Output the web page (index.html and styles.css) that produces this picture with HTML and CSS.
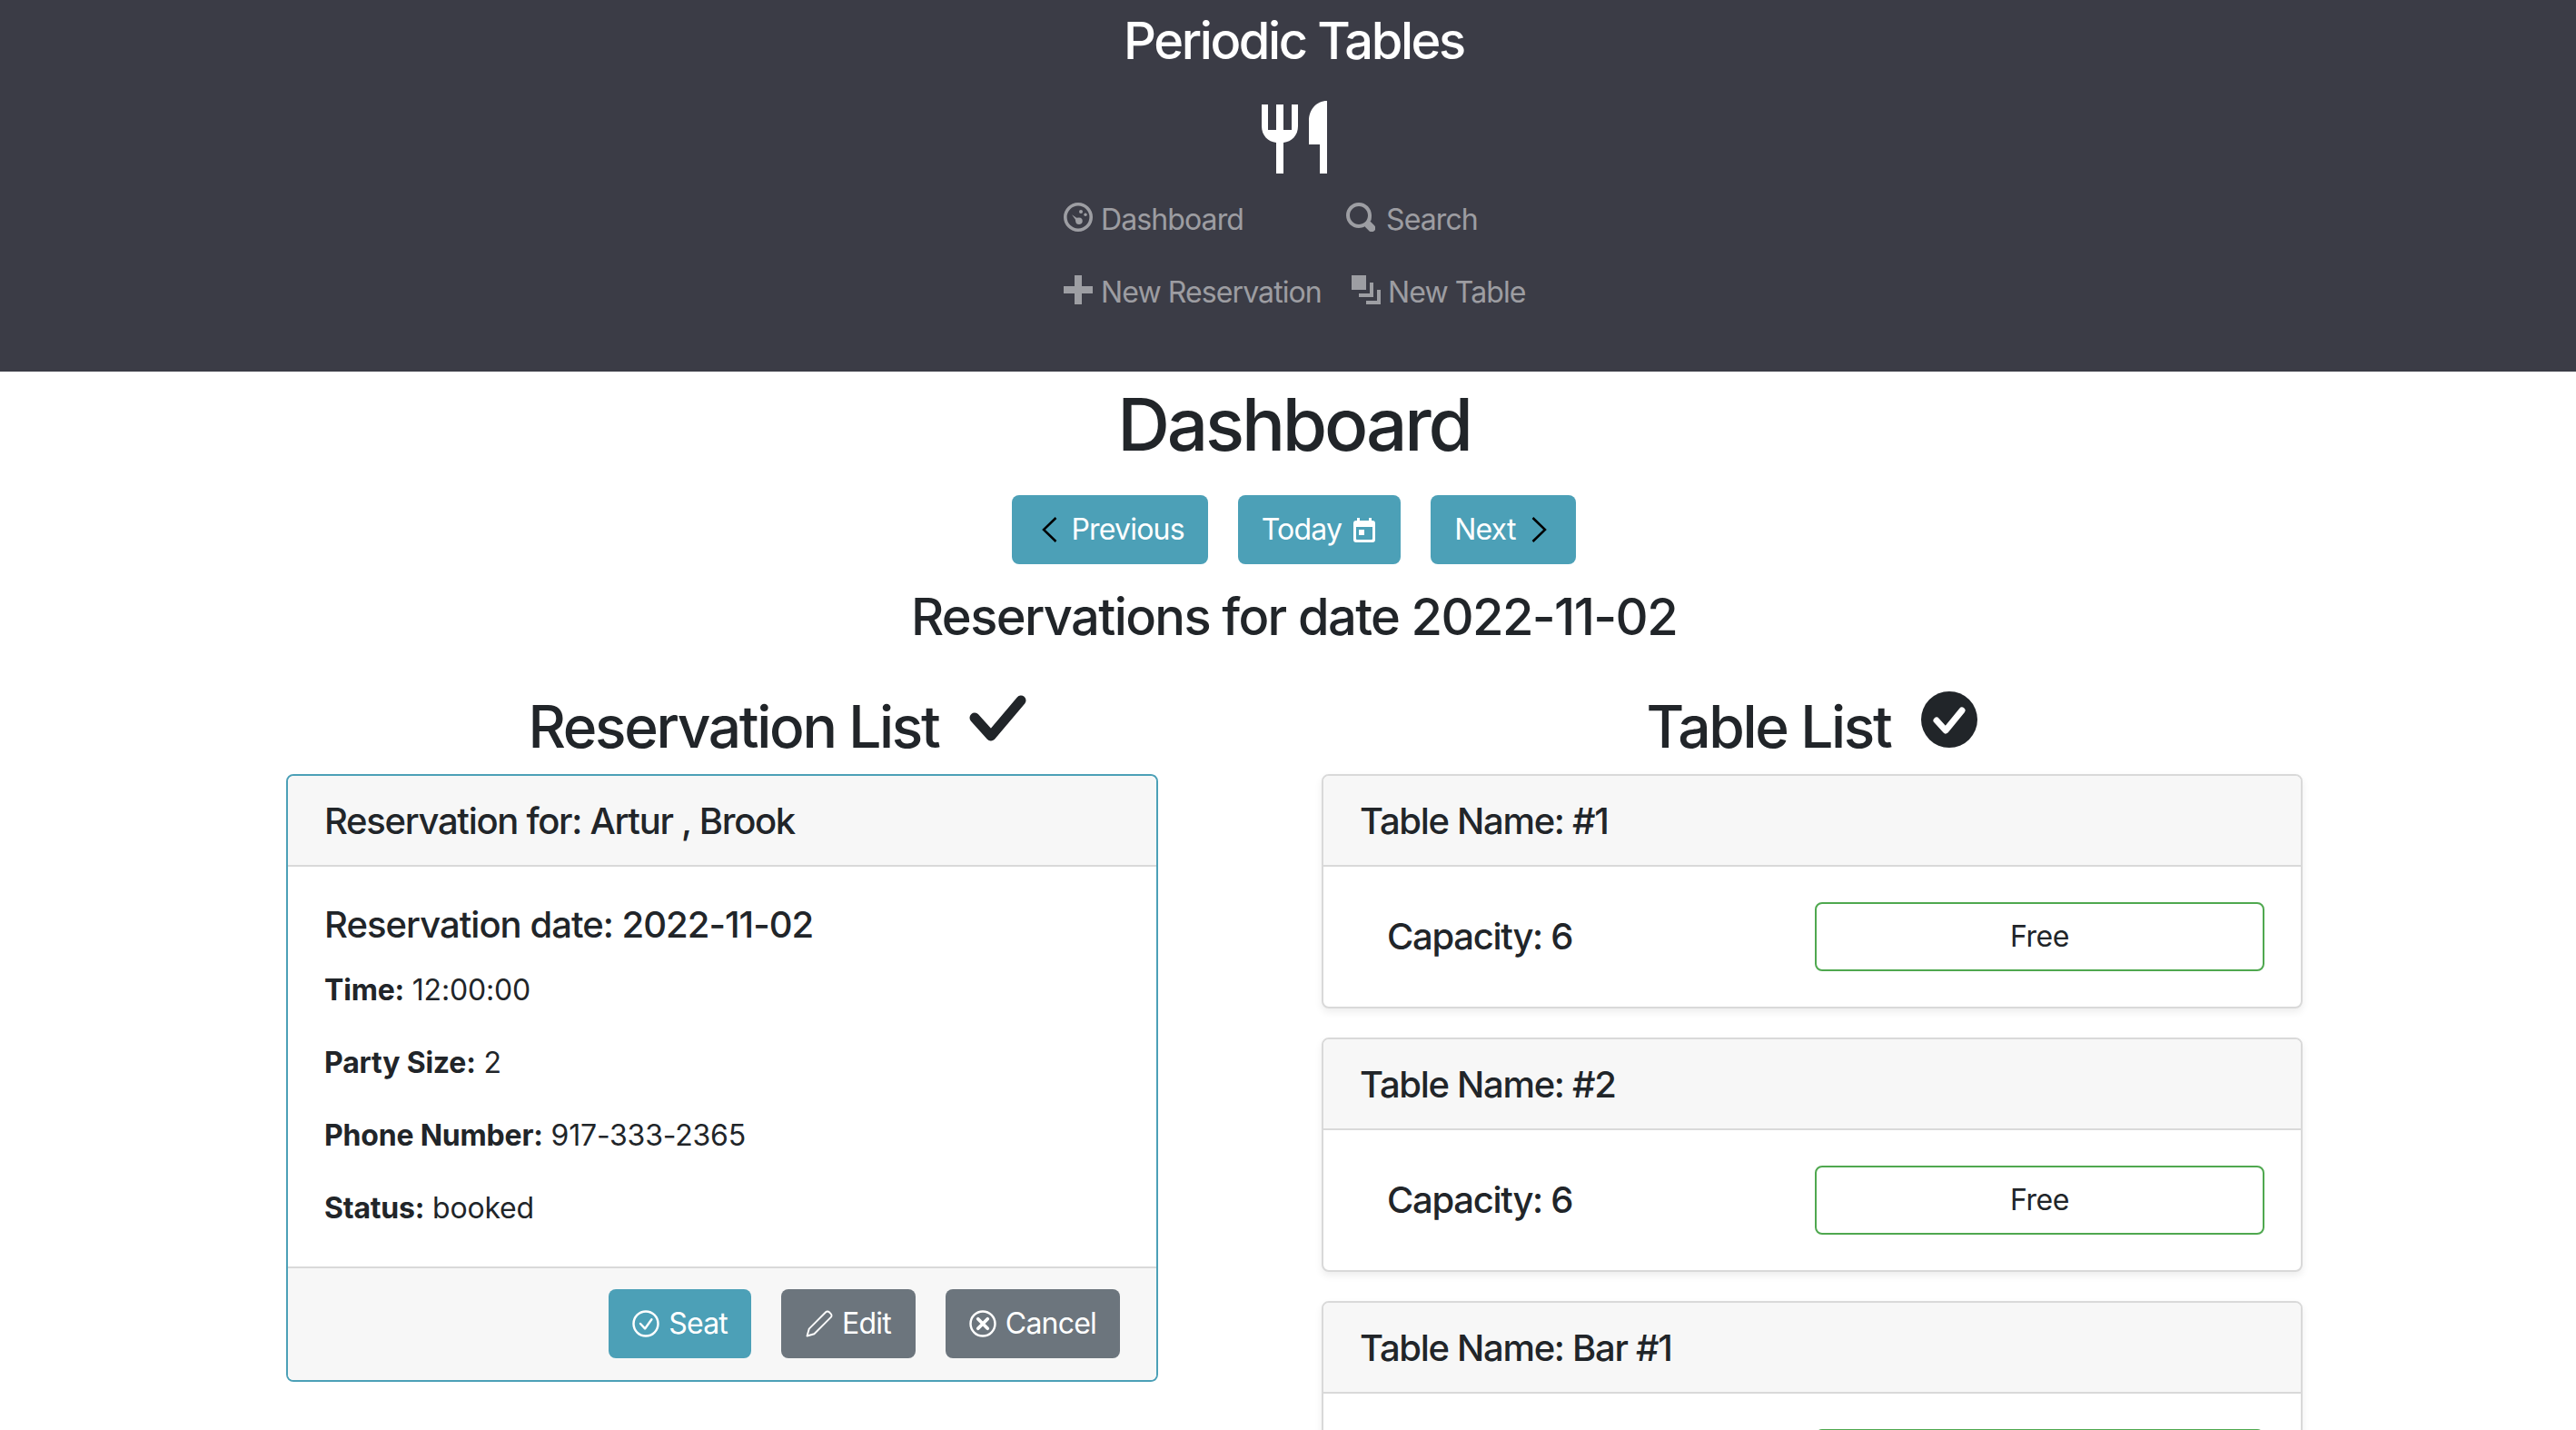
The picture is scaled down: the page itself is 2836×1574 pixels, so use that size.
FILE: index.html
```html
<!DOCTYPE html>
<html lang="en">
<head>
<meta charset="utf-8">
<title>Periodic Tables</title>
<link rel="stylesheet" href="styles.css">
</head>
<body>
<header class="topbar">
  <div class="brand">Periodic Tables</div>
  <svg class="logo" viewBox="0 0 72 80" aria-hidden="true"><path d="M0 4H7V32H16V4H24V32H33V4H40V28C40 38 33 45 24 46V80H16V46C7 45 0 38 0 28Z"/><path d="M72 0V80H64V48H52V22C52 10 60 0 72 0Z"/></svg>
  <nav class="nav">
    <a class="nav-link"><svg class="nav-icon" viewBox="0 0 8 8"><path fill-rule="evenodd" d="M4 0a4 4 0 1 0 0 8 4 4 0 0 0 0-8zm0 .9a3.100 3.100 0 1 1 0 6.200 3.100 3.100 0 0 1 0-6.200z"/><circle cx="4.750" cy="2.500" r=".5"/><circle cx="6" cy="3.300" r=".42"/><path d="M2.250 3.300l1.300.9.7-.1a.95.95 0 1 1-.95 1.100l-.1-.6z"/></svg><span class="gap-a">Dashboard</span></a>
    <a class="nav-link"><svg class="nav-icon" viewBox="0 0 8 8"><path d="M3.500 0C1.570 0 0 1.570 0 3.500S1.570 7 3.500 7c.59 0 1.170-.14 1.660-.41a1 1 0 0 0 .13.13l1 1a1.020 1.020 0 1 0 1.440-1.440l-1-1a1 1 0 0 0-.16-.13C6.840 5.160 7 4.590 7 3.500 7 1.570 5.430 0 3.500 0zm0 1C4.890 1 6 2.110 6 3.500c0 .66-.24 1.270-.66 1.720l-.03.03a1 1 0 0 0-.13.13c-.44.4-1.040.62-1.680.62C2.110 6 1 4.890 1 3.500S2.110 1 3.500 1z"/></svg><span class="gap-b">Search</span></a>
    <a class="nav-link"><svg class="nav-icon" viewBox="0 0 8 8"><path d="M3 0v3H0v2h3v3h2V5h3V3H5V0z"/></svg><span class="gap-a">New Reservation</span></a>
    <a class="nav-link col2-b"><svg class="nav-icon" viewBox="0 0 8 8"><path d="M0 0v4h4V0zm5 2v3H2v1h4V2zm2 2v3H4v1h4V4z"/></svg><span class="gap-c">New Table</span></a>
  </nav>
</header>

<main class="page">
  <h1 class="page-title">Dashboard</h1>
  <div class="date-nav">
    <button class="btn btn-teal btn-prev"><svg class="chev" viewBox="0 0 17 28"><path d="M15.500 1L2 14l13.500 13"/></svg><span class="gap-prev">Previous</span></button>
    <button class="btn btn-teal btn-today">Today<svg class="cal" viewBox="0 0 24 27"><path fill-rule="evenodd" d="M4 0h3v3h10V0h3v3h1a3 3 0 0 1 3 3v18a3 3 0 0 1-3 3H3a3 3 0 0 1-3-3V6a3 3 0 0 1 3-3h1zM3 10v13a1 1 0 0 0 1 1h16a1 1 0 0 0 1-1V10zm3 3h6v6H6z"/></svg></button>
    <button class="btn btn-teal btn-next">Next<svg class="chev chev-next" viewBox="0 0 17 28"><path d="M1.500 1L15 14 1.500 27"/></svg></button>
  </div>
  <h2 class="date-title">Reservations for date 2022-11-02</h2>

  <div class="columns">
    <section class="col-left">
      <h2 class="list-title"><span>Reservation List</span><svg class="check-big" viewBox="0 0 63 51"><path d="M6 25l18 20L57 6"/></svg></h2>
      <article class="card card-teal">
        <div class="card-header">Reservation for: Artur , Brook</div>
        <div class="card-body res-body">
          <h3 class="res-date">Reservation date: 2022-11-02</h3>
          <p><b>Time:</b> 12:00:00</p>
          <p><b>Party Size:</b> 2</p>
          <p><b>Phone Number:</b> 917-333-2365</p>
          <p><b>Status:</b> booked</p>
        </div>
        <div class="card-footer">
          <button class="btn btn-teal"><svg class="btn-icon" viewBox="0 0 16 16"><circle class="ring" cx="8" cy="8" r="7.200"/><path class="tick" d="M4.800 8l2.700 2.900 3.900-5.400"/></svg>Seat</button>
          <button class="btn btn-grey btn-edit"><svg class="btn-icon" viewBox="0 0 16 16"><path class="pen" d="M11.800 1.200a1.400 1.400 0 0 1 2 0l1 1a1.400 1.400 0 0 1 0 2L5 14 .8 15.200 2 11z"/></svg>Edit</button>
          <button class="btn btn-grey"><svg class="btn-icon" viewBox="0 0 16 16"><circle class="ring" cx="8" cy="8" r="7.200"/><path class="cross" d="M5.200 5.200l5.600 5.600M10.800 5.200l-5.600 5.600"/></svg>Cancel</button>
        </div>
      </article>
    </section>

    <section class="col-right">
      <h2 class="list-title"><span>Table List</span><svg class="check-circle" viewBox="0 0 62 62"><circle cx="31" cy="31" r="31"/><path d="M17 32l10 11 18-22"/></svg></h2>
      <article class="card card-table">
        <div class="card-header">Table Name: #1</div>
        <div class="card-body table-body"><h3 class="capacity">Capacity: 6</h3><button class="btn btn-free">Free</button></div>
      </article>
      <article class="card card-table">
        <div class="card-header">Table Name: #2</div>
        <div class="card-body table-body"><h3 class="capacity">Capacity: 6</h3><button class="btn btn-free">Free</button></div>
      </article>
      <article class="card card-table">
        <div class="card-header">Table Name: Bar #1</div>
        <div class="card-body table-body"><h3 class="capacity">Capacity: 1</h3><button class="btn btn-free">Free</button></div>
      </article>
    </section>
  </div>
</main>
</body>
</html>
```

FILE: styles.css
```css
* { box-sizing: border-box; }
html, body { margin: 0; height: 100vh; overflow: hidden; }
body {
  font-family: Inter, "Liberation Sans", sans-serif;
  font-size: 32px;
  line-height: 48px;
  color: #212529;
  background: #fff;
}
.topbar {
  height: 409px;
  padding: 12px 0 0 13px;
  background: #3b3c46;
  display: flex;
  flex-direction: column;
  align-items: center;
}
.brand {
  font-size: 56px;
  line-height: 67px;
  font-weight: 500;
  letter-spacing: -2.400px;
  color: #fff;
  margin-bottom: 32px;
}
.logo { width: 72px; height: 80px; fill: #fff; margin-bottom: 8px; flex: none; }
.nav {
  display: grid;
  grid-template-columns: 311px 210px;
  grid-auto-rows: 80px;
  align-self: flex-start;
  margin-left: 1158px;
}
.nav-link {
  display: flex;
  align-items: center;
  color: rgba(255, 255, 255, .5);
  letter-spacing: -.9px;
}
.nav-link span { padding-top: 6px; }
.nav-icon { width: 32px; height: 32px; fill: rgba(255, 255, 255, .5); flex: none; }
.gap-a { margin-left: 9px; }
.gap-b { margin-left: 12px; }
.gap-c { margin-left: 8px; }
.col2-b { padding-left: 6px; }

.page { padding-left: 13px; }
.page-title {
  margin: 10px 0 30px;
  font-size: 80px;
  line-height: 96px;
  font-weight: 500;
  letter-spacing: -3.200px;
  text-align: center;
}
.date-nav { display: flex; justify-content: center; gap: 33px; }
.btn {
  display: inline-flex;
  align-items: center;
  justify-content: center;
  height: 76px;
  padding: 0 26px;
  border: 0;
  border-radius: 8px;
  font: inherit;
  letter-spacing: -.8px;
  color: #fff;
  white-space: nowrap;
}
.btn-teal { background: #4ca0b7; }
.btn-grey { background: #6c757d; }
.btn-edit { padding: 0 27px; }
.chev { width: 17px; height: 28px; fill: none; stroke: #000; stroke-width: 2.500; flex: none; margin-left: 7px; }
.gap-prev { margin-left: 15px; }
.chev-next { margin-left: 17px; margin-right: 6px; }
.cal { width: 24px; height: 27px; fill: #fff; margin: 0 2px 0 13px; flex: none; }
.date-title {
  margin: 25px 0 48px;
  font-size: 56px;
  line-height: 67px;
  font-weight: 500;
  letter-spacing: -1.620px;
  text-align: center;
}
.columns { display: flex; gap: 58px; padding-left: 302px; }
.col-left { width: 1082px; }
.col-right { width: 1080px; }
.list-title {
  display: flex;
  justify-content: center;
  align-items: center;
  gap: 34px;
  height: 77px;
  margin: 0 0 14px;
  font-size: 64px;
  line-height: 77px;
  font-weight: 500;
  letter-spacing: -2.350px;
}
.check-big { width: 63px; height: 51px; fill: none; stroke: #212529; stroke-width: 11; stroke-linecap: round; stroke-linejoin: round; position: relative; top: -9px; }
.check-circle { width: 62px; height: 62px; position: relative; top: -8px; }
.check-circle circle { fill: #212529; }
.check-circle path { fill: none; stroke: #fff; stroke-width: 7; stroke-linecap: round; stroke-linejoin: round; }
.card {
  border: 2px solid #d9d9d9;
  border-radius: 8px;
  background: #fff;
  overflow: hidden;
}
.card-teal { width: 960px; border-color: #4ca0b7; }
.card-table { margin-bottom: 32px; box-shadow: 0 4px 8px rgba(0, 0, 0, .075); overflow: visible; }
.card-header {
  padding: 26px 40px 24px;
  height: 100px;
  background: #f7f7f7;
  border-bottom: 2px solid #d9d9d9;
  font-size: 40px;
  line-height: 48px;
  font-weight: 500;
  letter-spacing: -1.300px;
  border-radius: 6px 6px 0 0;
}
.card-body { padding: 40px; }
.res-date { margin: 0 0 24px; font-size: 40px; line-height: 48px; font-weight: 500; letter-spacing: -.97px; }
.res-body p { margin: 0 0 32px; letter-spacing: -.2px; }
.res-body p:last-child { margin-bottom: 0; }
.res-body b { font-weight: 700; }
.card-footer {
  display: flex;
  justify-content: flex-end;
  gap: 33px;
  padding: 23px 40px 24px 40px;
  background: #f7f7f7;
  border-top: 2px solid #d9d9d9;
}
.btn-icon { width: 30px; height: 30px; margin-right: 10px; flex: none; fill: none; stroke: #fff; }
.ring { stroke-width: 1.300; }
.tick { stroke-width: 1.300; stroke-linecap: round; stroke-linejoin: round; }
.pen { stroke-width: 1; stroke-linejoin: round; }
.cross { stroke-width: 2; stroke-linecap: round; }
.table-body { display: flex; align-items: center; padding-top: 39px; padding-bottom: 39px; }
.capacity { margin: 0; width: 501px; padding-left: 30px; font-size: 40px; line-height: 48px; font-weight: 500; letter-spacing: -1.300px; flex: none; }
.btn-free {
  flex: 1;
  background: #fff;
  color: #212529;
  border: 2px solid #4fa84f;
  letter-spacing: -.5px;
}
```
